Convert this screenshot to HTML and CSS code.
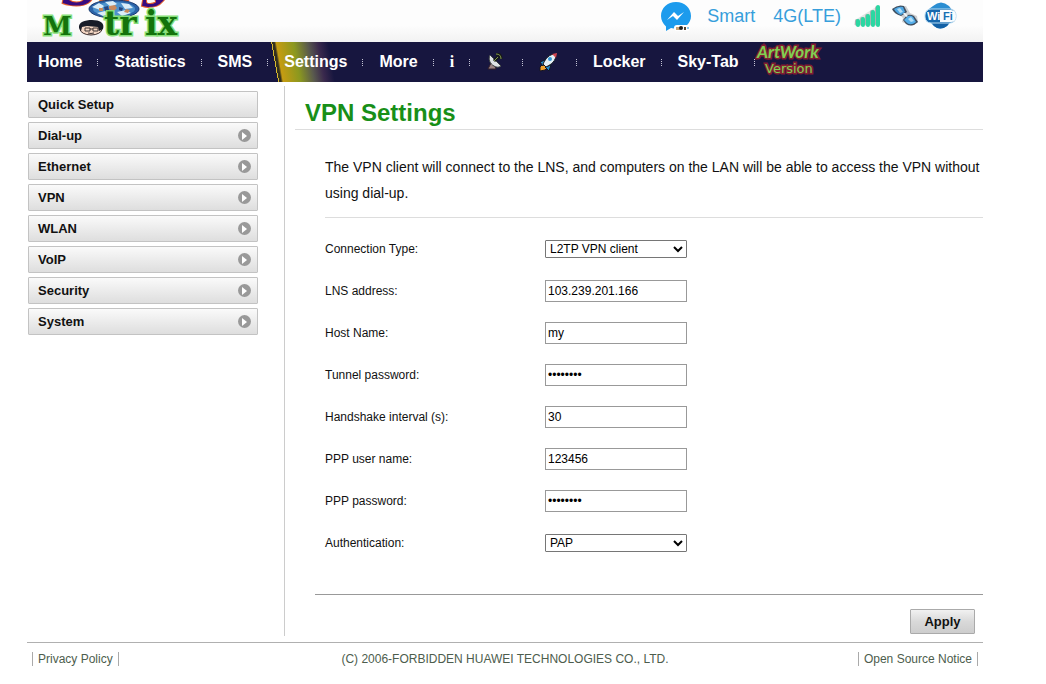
FILE: index.html
```html
<!DOCTYPE html>
<html lang="en">
<head>
<meta charset="utf-8">
<title>VPN Settings</title>
<link rel="stylesheet" href="styles.css">
</head>
<body>
<header class="header">
  <svg class="logo" width="160" height="42" viewBox="0 0 160 42" role="img" aria-label="Sky Matrix">
    <g class="logo-sky">
      <text x="35" y="5" font-size="50">S</text>
      <text x="72" y="0" font-size="46">k</text>
      <text x="116" y="-5" font-size="54">y</text>
    </g>
    <ellipse cx="87" cy="9" rx="25" ry="9" fill="#2b63a8" stroke="#183a70"/>
    <ellipse cx="87" cy="9" rx="21" ry="7" fill="#4d92cc"/>
    <path d="M65 7l7-4 5 3-4 4zM78 2l8-1 4 3-6 3zM94 3l8 1 4 4-8 1zM70 13l8-2 5 4-7 1zM90 12l9-2 5 3-9 3z" fill="#d9edf8"/>
    <path d="M82 6l6-1 2 3-3 3-5-2zM99 9l4 1-2 3-4-1zM72 8l4 0 0 3-4 0z" fill="#c98a5d"/>
    <path d="M77 7l4-1 1 4-4 1zM92 7l4 1-1 3-3-1z" fill="#27467f"/>
    <g class="logo-word">
      <text x="16" y="35" font-size="26">M</text>
      <text x="77" y="35" font-size="33">tr</text>
      <text x="118" y="35" font-size="33">ix</text>
    </g>
    <ellipse cx="64" cy="29" rx="11" ry="6" fill="#f2d5c2" stroke="#3a2a2a"/>
    <path d="M52 28c-1-6 6-8 13-8 8 0 13 3 11 9l-4 2-1-4-11-1-5 1-1 4z" fill="#171c28"/>
    <path d="M58 28h5v3h-5zM66 28h5v3h-5zM63 29h3M61 33q3 1 6 0" fill="none" stroke="#3b3333"/>
  </svg>
  <div class="status">
    <svg width="32" height="32" viewBox="0 0 32 32" role="img" aria-label="Messenger">
      <path d="M16 2C7.500 2 1 8 1 16c0 4 2 8 5 10.500V31l5-3c11 3 20-3 20-12C31 8 24.500 2 16 2z" fill="#1c9bed"/>
      <path d="M7 20l7-8 4 4 6-4-7 8-4-4z" fill="#fff"/>
      <rect x="14" y="25" width="16" height="6" rx="3" fill="#fff"/>
      <path d="M16 27h4v3h-4z" fill="#caa476"/><circle cx="21" cy="28" r="2" fill="#222"/><path d="M24 27h2v3h-2z" fill="#54432f"/><path d="M27 27h2v2h-2z" fill="#8cc8ee"/>
    </svg>
    <span class="carrier">Smart</span>
    <span class="network">4G(LTE)</span>
    <svg class="signal" width="30" height="24" viewBox="0 0 30 24" role="img" aria-label="Signal strength">
      <path d="M0 21l1-5L22 3l4-1v19z" fill="#e3e6e5"/>
      <path d="M3 20v-3M8 20v-5M13 20v-8M18 20V8M23 20V4" stroke="#a4b5b0" stroke-width="4" stroke-linecap="round"/>
      <path d="M4 21v-4M9 21v-6M14 21v-9M19 21V8M24 21V3" stroke="#2bd7a2" stroke-width="4" stroke-linecap="round"/>
    </svg>
    <svg class="satellite" width="28" height="24" viewBox="0 0 28 24" role="img" aria-label="Data connection">
      <path d="M3 5l12-3 4 7 7 3 1 6-6 4-10-4 1-4z" fill="#cfd0d2"/>
      <path d="M1 5q6-5 12-3l3 6-6 4Q3 10 1 5z" fill="#3f4f60"/>
      <path d="M3 5q5-3 9-2l2 5-4 3Q5 9 3 5z" fill="#4da5e2"/>
      <path d="M12 16l4-5q4-1 7 1l4 6q-6 6-12 2z" fill="#3f4f60"/>
      <path d="M13 16l4-4q3-1 5 1l3 5q-5 4-9 1z" fill="#55aeea"/>
      <path d="M6 5l3-1 3 4-3 1zM17 15l3-2 3 4-3 1z" fill="#b1ddf6"/>
      <path d="M12 9l2 0 3 3-2 1z" fill="#eef6fb"/>
    </svg>
    <svg class="wifi" width="34" height="30" viewBox="0 0 34 30" role="img" aria-label="WiFi">
      <path d="M9 5Q17-2 25 5l3 4q4 7-1 11l-4 5q-7 5-13 0l-5-5Q0 14 5 8z" fill="#2b8ed2"/>
      <path d="M5 18h24l-6 7q-7 5-13 0z" fill="#1260a5"/>
      <rect x="1" y="8" width="31" height="14" rx="6" fill="#1768ad" stroke="#b9ddf3"/>
      <path d="M16 9h11q5 0 5 6t-5 6H16z" fill="#f8fcff"/>
      <text x="3" y="19" class="wifi-wi">Wi</text><text x="19" y="19" class="wifi-fi">Fi</text>
    </svg>
  </div>
</header>

<nav class="nav" aria-label="Main">
  <ul class="nav-list">
    <li><a href="#">Home</a></li>
    <li><a href="#">Statistics</a></li>
    <li><a href="#">SMS</a></li>
    <li class="active"><a href="#">Settings</a></li>
    <li><a href="#">More</a></li>
    <li><a class="info" href="#">i</a></li>
    <li><a class="nav-icon dish" href="#" aria-label="Antenna">
      <svg width="18" height="18" viewBox="0 0 18 18">
        <path d="M5 10l-3 6h8l-2-5z" fill="#9d8686" stroke="#35202a"/>
        <path d="M4 2c-2 4 0 9 4 11 3 2 6 1 7 0z" fill="#dfe3e6" stroke="#3d4243"/>
        <path d="M8 8l4-4M10 1q5 0 5 5" fill="none" stroke="#171b14" stroke-width="3"/>
        <path d="M8 8l4-4M10 1q5 0 5 5" fill="none" stroke="#819653"/>
      </svg></a></li>
    <li><a class="nav-icon rocket" href="#" aria-label="Rocket">
      <svg width="19" height="20" viewBox="0 0 19 20">
        <path d="M4 12l-3 3v4l5-1 3-3z" fill="#f0a32d" stroke="#171522"/>
        <path d="M6 8L1 10l3 4zM12 13l-2 6-4-4z" fill="#2589c6" stroke="#101724"/>
        <path d="M17 2c-7 0-10 4-13 10l3 3c6-3 10-6 10-13z" fill="#e3eff5" stroke="#15191f"/>
        <path d="M18 1l-5 1 4 4z" fill="#d44650"/><circle cx="11" cy="7" r="2" fill="#3698d4"/>
      </svg></a></li>
    <li><a href="#">Locker</a></li>
    <li><a href="#">Sky-Tab</a></li>
  </ul>
  <svg class="artwork" width="70" height="38" viewBox="0 0 70 38" role="img" aria-label="ArtWork Version">
    <g class="artwork-word"><text class="artwork-top" x="2" y="16">ArtWork</text><text class="artwork-bottom" x="10" y="31">Version</text></g>
  </svg>
</nav>

<div class="body">
  <aside class="side">
    <ul class="menu">
      <li><a href="#">Quick Setup</a></li>
      <li><a class="more" href="#">Dial-up</a></li>
      <li><a class="more" href="#">Ethernet</a></li>
      <li><a class="more" href="#">VPN</a></li>
      <li><a class="more" href="#">WLAN</a></li>
      <li><a class="more" href="#">VoIP</a></li>
      <li><a class="more" href="#">Security</a></li>
      <li><a class="more" href="#">System</a></li>
    </ul>
  </aside>
  <main class="main">
    <h1>VPN Settings</h1>
    <p class="intro">The VPN client will connect to the LNS, and computers on the LAN will be able to access the VPN without using dial-up.</p>
    <form>
      <div class="fields">
        <div class="row"><label for="type">Connection Type:</label><select id="type"><option>L2TP VPN client</option></select></div>
        <div class="row"><label for="lns">LNS address:</label><input id="lns" type="text" value="103.239.201.166"></div>
        <div class="row"><label for="host">Host Name:</label><input id="host" type="text" value="my"></div>
        <div class="row"><label for="tunnel">Tunnel password:</label><input id="tunnel" type="password" value="password"></div>
        <div class="row"><label for="handshake">Handshake interval (s):</label><input id="handshake" type="text" value="30"></div>
        <div class="row"><label for="user">PPP user name:</label><input id="user" type="text" value="123456"></div>
        <div class="row"><label for="ppp">PPP password:</label><input id="ppp" type="password" value="password"></div>
        <div class="row"><label for="auth">Authentication:</label><select id="auth"><option>PAP</option></select></div>
      </div>
      <div class="actions"><button type="button">Apply</button></div>
    </form>
  </main>
</div>

<footer class="footer">
  <a href="#">Privacy Policy</a>
  <span>(C) 2006-FORBIDDEN HUAWEI TECHNOLOGIES CO., LTD.</span>
  <a href="#">Open Source Notice</a>
</footer>
</body>
</html>
```
FILE: styles.css
```css
* { box-sizing: border-box; }
body {
  margin: 0;
  padding: 0 63px 0 27px;
  background: #fff;
  color: #111;
  font: 12px/16px "Liberation Sans", Arial, sans-serif;
}
a { color: inherit; text-decoration: none; }
ul { list-style: none; margin: 0; padding: 0; }

.header {
  display: flex;
  justify-content: space-between;
  height: 42px;
  background: linear-gradient(#fdfdfd 60%, #f2f2f2);
}
.logo { overflow: hidden; }
.logo text { paint-order: stroke; }
.logo-sky {
  font-family: "DejaVu Serif", serif;
  font-weight: bold;
  font-style: italic;
  fill: #380b80;
  stroke: #e8632e;
  stroke-width: 2;
}
.logo-word {
  font-family: "DejaVu Serif", serif;
  font-weight: bold;
  fill: #14730c;
  stroke: #86df78;
  stroke-width: 3;
}
.status {
  display: flex;
  align-items: center;
  height: 32px;
  padding-right: 25px;
  color: #379edb;
  font-size: 18px;
}
.carrier { margin-left: 15px; }
.network { margin-left: 18px; }
.signal { margin-left: 13px; }
.satellite { margin-left: 7px; }
.wifi { margin-left: 5px; }
.wifi-wi, .wifi-fi { font: bold 11px "Liberation Sans", sans-serif; fill: #fff; }
.wifi-fi { fill: #1670b4; }

.nav {
  display: flex;
  height: 40px;
  background: #17163f;
}
.nav-list {
  display: flex;
  color: #fff;
  font-size: 16px;
  font-weight: bold;
  line-height: 40px;
}
.nav-list li {
  position: relative;
  padding: 0 16px;
}
.nav-list li:first-child { padding-left: 11px; }
.nav-list li::after {
  content: "";
  position: absolute;
  top: 17px;
  right: 0;
  width: 1px;
  height: 8px;
  background: repeating-linear-gradient(#c4c4d4 0 1px, transparent 1px 2px);
}
.nav-list a { display: block; }
.nav-list .active {
  background:
    linear-gradient(80deg, #17163f 0 10px, #d8b92d 10px 11px, #33301f 11px 13px, #c69c12 15px, #8b981f 32px, #59594e 46px, #3a294d 56px, #17163f 66px);
}
.info { font-family: "Liberation Serif", serif; }
.nav-list .nav-icon { display: flex; align-items: center; height: 40px; }
.nav-list .dish { width: 21px; }
.nav-list .rocket { width: 22px; }
.artwork-word {
  fill: #80cf52;
  stroke: #821d31;
  stroke-width: 3;
  paint-order: stroke;
}
.artwork-top { font: italic bold 17px Lato, sans-serif; }
.artwork-bottom { font: 13px "DejaVu Sans", sans-serif; }

.body {
  display: flex;
  min-height: 560px;
  padding: 4px 0 6px;
}
.side {
  width: 258px;
  flex: none;
  padding: 5px 26px 0 1px;
  border-right: 1px solid #ccc;
}
.menu { display: grid; gap: 4px; }
.menu a {
  display: flex;
  align-items: center;
  height: 27px;
  padding: 0 6px 0 9px;
  border: 1px solid #c3c3c3;
  border-radius: 1px;
  background: linear-gradient(#fafafa, #e9e9e9 60%, #dedede);
  color: #111;
  font-size: 13px;
  font-weight: bold;
}
.menu .more { position: relative; }
.menu .more::after {
  content: "";
  width: 13px;
  height: 13px;
  margin-left: auto;
  border-radius: 50%;
  background: #999;
}
.menu .more::before {
  content: "";
  position: absolute;
  right: 10px;
  top: 9px;
  border: 4px solid transparent;
  border-left: 5px solid #fff;
  border-right: 0;
}
.main { flex: 1; min-width: 0; padding-left: 10px; }
h1 {
  margin: 0;
  padding: 11px 10px 0;
  height: 44px;
  border-bottom: 1px solid #ddd;
  color: #188f18;
  font-size: 24px;
  line-height: 32px;
}
.intro {
  margin: 0 0 0 30px;
  padding: 24px 0 11px;
  border-bottom: 1px solid #ddd;
  font-size: 14px;
  line-height: 26px;
}
.fields { padding: 10px 0 30px 30px; }
.row { display: flex; align-items: center; height: 42px; }
.row label { width: 220px; }
.row input, .row select {
  width: 142px;
  border: 1px solid #999;
  background: #fff;
  color: #000;
  font: 12px "Liberation Sans", Arial, sans-serif;
}
.row input { height: 22px; padding: 0 2px; }
.row select { height: 18px; padding: 0; border-color: #767676; border-radius: 1px; }
.actions {
  display: flex;
  justify-content: flex-end;
  margin-left: 20px;
  padding: 14px 8px 0 0;
  border-top: 1px solid #999;
}
.actions button {
  width: 65px;
  height: 25px;
  padding: 0;
  border: 1px solid #aaa;
  border-radius: 1px;
  background: linear-gradient(#f1f1f1, #d9d9d9 50%, #cdcdcd);
  color: #111;
  font: bold 13px "Liberation Sans", Arial, sans-serif;
}
.footer {
  display: grid;
  grid-template-columns: 1fr auto 1fr;
  padding: 9px 5px 0;
  border-top: 1px solid #b0b0b0;
  color: #4d5d4d;
  line-height: 14px;
}
.footer a {
  justify-self: start;
  padding: 0 5px;
  border: solid #aaa;
  border-width: 0 1px;
}
.footer a:last-child { justify-self: end; }
```
